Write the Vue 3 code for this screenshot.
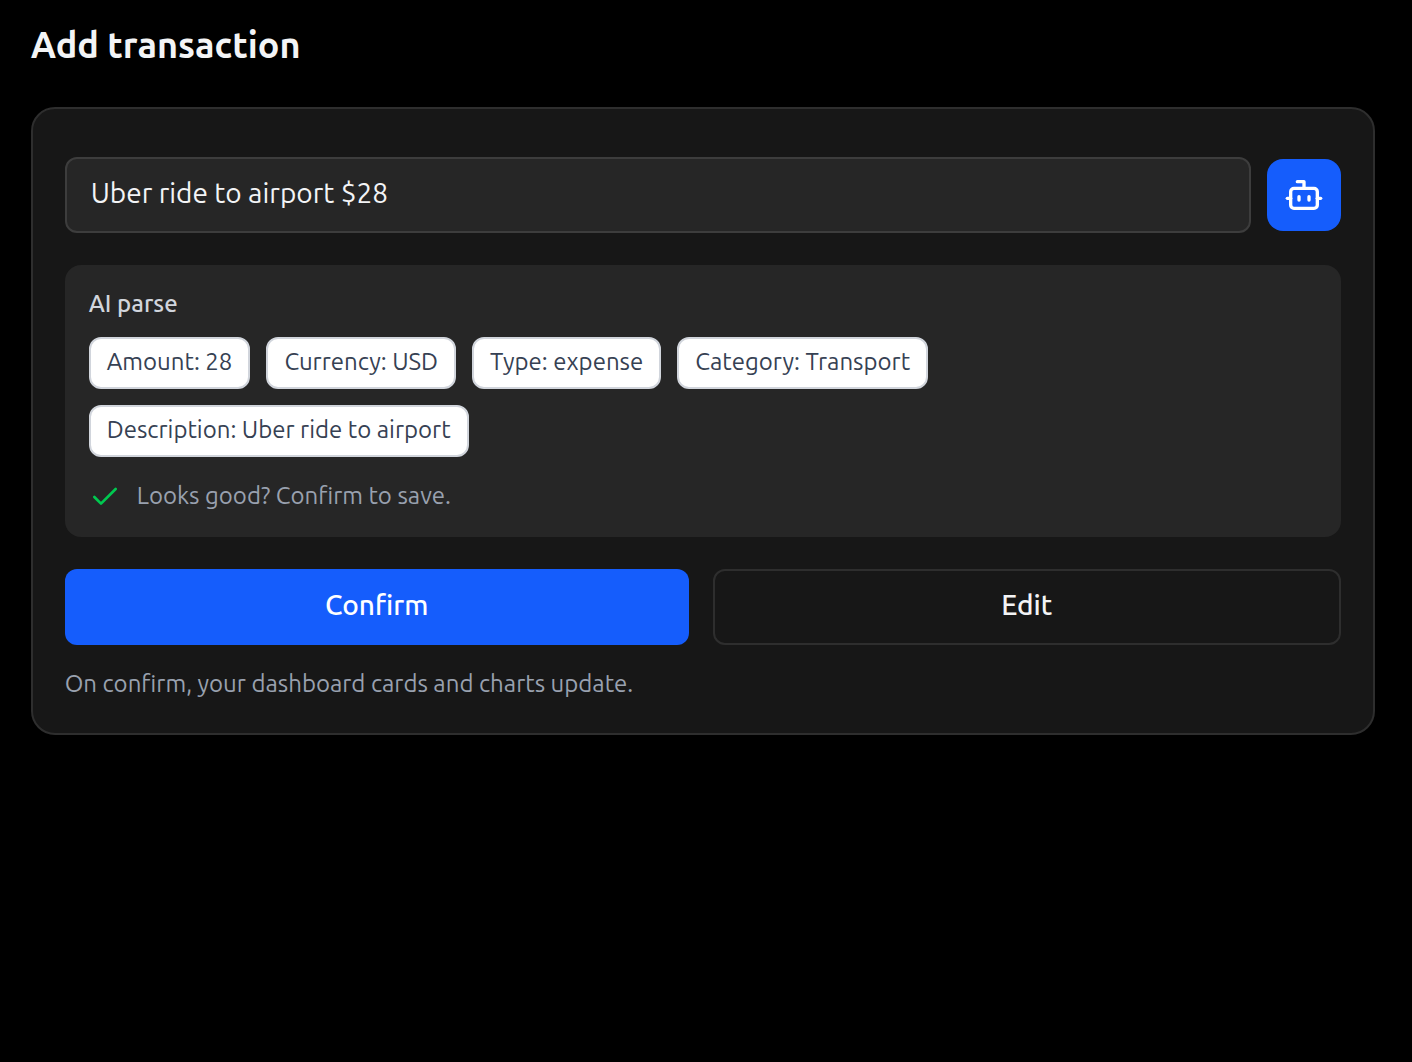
<script setup>
import { ref } from 'vue'

const entry = ref('Uber ride to airport $28')
const fields = [
  { label: 'Amount', value: '28' },
  { label: 'Currency', value: 'USD' },
  { label: 'Type', value: 'expense' },
  { label: 'Category', value: 'Transport' },
  { label: 'Description', value: 'Uber ride to airport' },
]
</script>

<template>
  <main class="page">
    <h1 class="title">Add transaction</h1>
    <section class="card">
      <div class="entry">
        <input v-model="entry" class="entry-input" type="text" />
        <button class="entry-parse" type="button" aria-label="Parse">
          <svg width="40" height="40" viewBox="0 0 24 24" fill="none" stroke="currentColor" stroke-width="2" stroke-linecap="round" stroke-linejoin="round">
            <path d="M12 8V4H8" />
            <rect width="16" height="12" x="4" y="8" rx="2" />
            <path d="M2 14h2" />
            <path d="M20 14h2" />
            <path d="M15 13v2" />
            <path d="M9 13v2" />
          </svg>
        </button>
      </div>

      <div class="parse">
        <div class="parse-title">AI parse</div>
        <div class="chips">
          <span v-for="f in fields" :key="f.label" class="chip">{{ f.label }}: {{ f.value }}</span>
        </div>
        <div class="hint">
          <svg width="32" height="32" viewBox="0 0 24 24" fill="none" stroke="currentColor" stroke-width="2" stroke-linecap="round" stroke-linejoin="round">
            <path d="M20 6 9 17l-5-5" />
          </svg>
          <span class="hint-text">Looks good? Confirm to save.</span>
        </div>
      </div>

      <div class="actions">
        <button class="btn primary" type="button">Confirm</button>
        <button class="btn outline" type="button">Edit</button>
      </div>
      <p class="note">On confirm, your dashboard cards and charts update.</p>
    </section>
  </main>
</template>

<style>
body {
  background: #000;
}
</style>

<style scoped>
.page,
.page * {
  box-sizing: border-box;
}
.page {
  min-height: 1062px;
  padding: 17px 37.3px 0 30.7px;
  background: #000;
  color: #f3f4f6;
  font-family: Ubuntu, "Noto Sans", sans-serif;
}
.title {
  margin: 0 0 33.6px;
  font-size: 36px;
  font-weight: 600;
  line-height: 56px;
}
.card {
  padding: 48px 32px 32px;
  border: 2px solid #2e2e2e;
  border-radius: 24px;
  background: #171717;
}
.entry {
  display: flex;
  align-items: center;
  gap: 16px;
}
.entry-input {
  flex: 1;
  min-width: 0;
  height: 76px;
  padding: 14px 24px 18px;
  border: 2px solid #3d3d3d;
  border-radius: 12px;
  outline: none;
  background: #262626;
  color: #f3f4f6;
  font: 400 28px/40px Ubuntu, "Noto Sans", sans-serif;
}
.entry-parse {
  display: flex;
  align-items: center;
  justify-content: center;
  width: 74px;
  height: 72px;
  padding: 0;
  border: 0;
  border-radius: 16px;
  background: #155dfc;
  color: #fff;
}
.parse {
  margin-top: 32px;
  padding: 24px;
  border-radius: 16px;
  background: #262626;
}
.parse-title {
  padding-bottom: 2px;
  color: #d1d5dc;
  font-size: 24px;
  font-weight: 500;
  line-height: 30px;
}
.chips {
  display: flex;
  flex-wrap: wrap;
  gap: 16px;
  max-width: 960px;
  margin-top: 16px;
}
.chip {
  padding: 8px 16px 10px;
  border: 2px solid #d1d5dc;
  border-radius: 12px;
  background: #fff;
  color: #364153;
  font-size: 24px;
  line-height: 30px;
}
.hint {
  display: flex;
  align-items: center;
  gap: 16px;
  margin-top: 24px;
  color: #99a1af;
  font-size: 24px;
  line-height: 30px;
}
.hint svg {
  color: #00c950;
}
.hint-text {
  padding-bottom: 2px;
}
.actions {
  display: grid;
  grid-template-columns: 624fr 628fr;
  gap: 24px;
  margin-top: 32px;
}
.btn {
  height: 76px;
  padding: 16px 24px 20px;
  border: 0;
  border-radius: 12px;
  font: 500 28px/40px Ubuntu, "Noto Sans", sans-serif;
}
.primary {
  background: #155dfc;
  color: #fff;
}
.outline {
  padding: 14px 24px 18px;
  border: 2px solid #2e2e2e;
  background: transparent;
  color: #f3f4f6;
}
.note {
  margin: 24px 0 0;
  padding-bottom: 2px;
  color: #99a1af;
  font-size: 24px;
  line-height: 30px;
}
</style>
